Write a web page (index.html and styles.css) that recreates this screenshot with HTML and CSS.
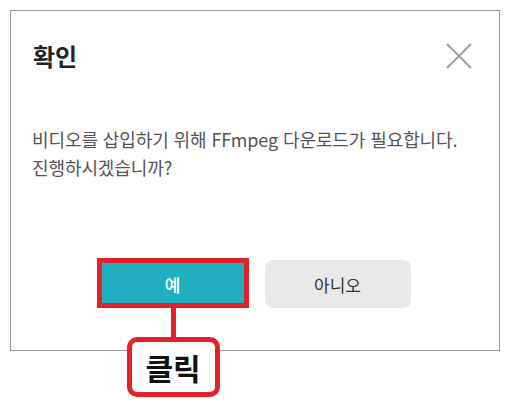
FILE: index.html
```html
<!DOCTYPE html>
<html lang="ko">
<head>
    <meta charset="UTF-8">
    <meta name="viewport" content="width=device-width, initial-scale=1.0">
    <title>확인</title>
    <link rel="stylesheet" href="styles.css">
</head>
<body>
    <div class="dialog">
        <div class="dialog-header">
            <h2 class="dialog-title">확인</h2>
            <button class="close-btn" aria-label="닫기">
                <svg width="28" height="28" viewBox="0 0 28 28">
                    <path d="M2 2 L26 26 M26 2 L2 26" stroke="#a0a0a0" stroke-width="2" fill="none"/>
                </svg>
            </button>
        </div>

        <p class="dialog-text">비디오를 삽입하기 위해 FFmpeg 다운로드가 필요합니다.<br>진행하시겠습니까?</p>

        <div class="dialog-actions">
            <div class="highlight">
                <button class="btn btn-yes">예</button>
                <span class="highlight-box"></span>
                <span class="highlight-line"></span>
                <span class="callout">클릭</span>
            </div>
            <button class="btn btn-no">아니오</button>
        </div>
    </div>
</body>
</html>
```

FILE: styles.css
```css
/* General Styles */
body {
    margin: 0;
    padding: 10px;
    min-height: 403px;
    box-sizing: border-box;
    background: #fff;
    font-family: "Noto Sans CJK KR", "Noto Sans", sans-serif;
    color: #333;
}

.dialog {
    box-sizing: border-box;
    width: 490px;
    height: 341px;
    border: 1px solid #9a9a9a;
    background: #fff;
    display: flex;
    flex-direction: column;
}

.dialog-header {
    display: flex;
    justify-content: space-between;
    align-items: center;
    padding: 28px 26px 0 22px;
}

.dialog-title {
    margin: 0;
    font-size: 24px;
    font-weight: 700;
    line-height: 34px;
    color: #222;
}

.close-btn {
    background: none;
    border: none;
    padding: 0;
    width: 28px;
    height: 28px;
    cursor: pointer;
}

.close-btn svg {
    display: block;
}

.dialog-text {
    margin: 52px 0 0 21px;
    font-size: 18px;
    line-height: 28px;
    color: #555;
    letter-spacing: -0.1px;
}

.dialog-actions {
    display: flex;
    justify-content: center;
    gap: 19px;
    margin-top: 79px;
}

.highlight {
    position: relative;
}

.btn {
    width: 146px;
    height: 48px;
    border: none;
    border-radius: 8px;
    font-family: inherit;
    font-size: 17px;
    cursor: pointer;
}

.btn-yes {
    background: #22aec1;
    color: #fff;
    font-weight: 500;
}

.btn-no {
    background: #e9e9e9;
    color: #333;
}

.highlight-box {
    position: absolute;
    top: -2px;
    bottom: 0;
    left: -3px;
    right: -3px;
    border: 5px solid #e4202a;
}

.highlight-line {
    position: absolute;
    top: 48px;
    left: 71px;
    width: 5px;
    height: 30px;
    background: #e4202a;
}

.callout {
    position: absolute;
    top: 77px;
    left: 27px;
    box-sizing: border-box;
    width: 93px;
    height: 60px;
    border: 5px solid #e4202a;
    border-radius: 10px;
    background: #fff;
    display: flex;
    align-items: center;
    justify-content: center;
    font-size: 30px;
    font-weight: 700;
    color: #111;
}
```
